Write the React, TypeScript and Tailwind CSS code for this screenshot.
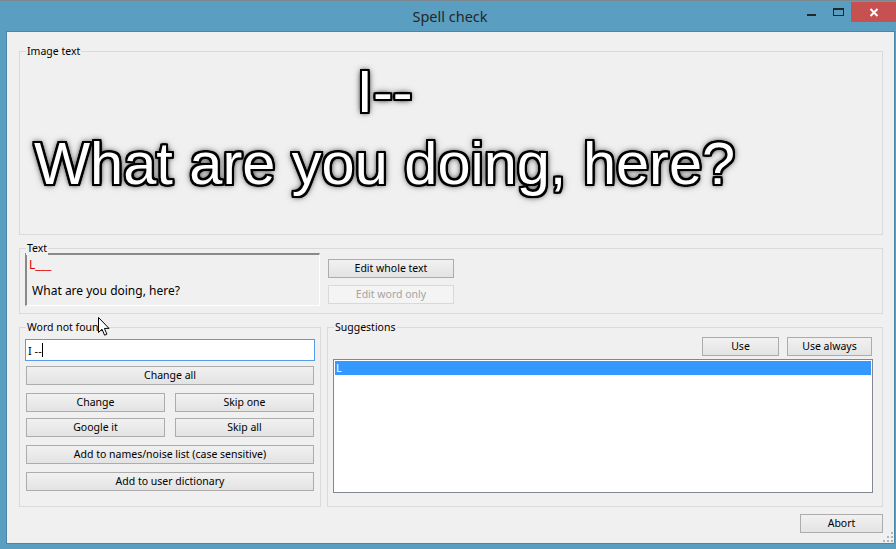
import React from "react";

function Btn({
  children,
  className = "",
  disabled = false,
}: {
  children: React.ReactNode;
  className?: string;
  disabled?: boolean;
}) {
  return (
    <div
      className={`flex items-center justify-center border text-[10.5px] leading-none whitespace-nowrap ${
        disabled
          ? "border-[#d9d9d9] bg-[#f4f4f4] text-[#a3a3a3]"
          : "border-[#acacac] bg-linear-to-b from-[#f1f1f1] to-[#e3e3e3] text-black"
      } ${className}`}
    >
      {children}
    </div>
  );
}

function GroupLabel({ children }: { children: React.ReactNode }) {
  return (
    <span className="absolute left-[6px] top-[-8px] px-[1px] bg-[#f0f0f0] text-[10.5px] leading-[14px] text-black whitespace-nowrap">
      {children}
    </span>
  );
}

export default function App() {
  return (
    <div className="w-[896px] h-[549px] overflow-hidden bg-[#5a9fc1] border-t border-[#7d8990] flex flex-col font-['Noto_Sans',sans-serif] text-black">
      {/* Title bar */}
      <div className="h-[30px] flex items-start shrink-0">
        <div className="w-[96px]" />
        <div className="flex-1 text-center text-[14.5px] leading-[30px] text-[#262626] pl-[4px]">
          Spell check
        </div>
        <div className="w-[96px] flex items-start">
          <div className="ml-[7px] mt-[13px] w-[9px] h-[2px] bg-[#262626]" />
          <div className="ml-[17px] mt-[7px] w-[11px] h-[8px] border border-t-2 border-[#262626]" />
          <div className="ml-[7px] mt-[1px] w-[45px] h-[20px] bg-[#c75050] flex items-center justify-center">
            <svg width="10" height="9" viewBox="0 0 10 9">
              <path d="M1.5 1 L8.5 8 M8.5 1 L1.5 8" stroke="#ffffff" strokeWidth="2" fill="none" />
            </svg>
          </div>
        </div>
      </div>

      {/* Client area */}
      <div className="relative ml-[6px] mr-[1px] mb-[5px] flex-1 border border-[#4b86a6] bg-[#f0f0f0] pl-[12px] pr-[11px] flex flex-col">
        {/* Image text */}
        <div className="relative mt-[19px] h-[184px] border border-[#dadada] shrink-0">
          <GroupLabel>Image text</GroupLabel>
          <div className="pl-[13px] pt-[4px]">
            <div className="w-[703px] text-center font-['Liberation_Sans',Arial,sans-serif] text-[59.5px] leading-[72px] text-white whitespace-nowrap [text-shadow:-2px_-2px_0_#000,2px_-2px_0_#000,-2px_2px_0_#000,2px_2px_0_#000,0_-2px_0_#000,0_2px_0_#000,-2px_0_0_#000,2px_0_0_#000,-1px_-2px_0_#000,1px_-2px_0_#000,-1px_2px_0_#000,1px_2px_0_#000,-2px_-1px_0_#000,2px_-1px_0_#000,-2px_1px_0_#000,2px_1px_0_#000,0_0_4px_#000,0_0_6px_rgba(0,0,0,0.8),0_0_8px_rgba(0,0,0,0.5)]">
              <div>I--</div>
              <div>What are you doing, here?</div>
            </div>
          </div>
        </div>

        {/* Text */}
        <div className="relative mt-[13px] h-[66px] border border-[#dadada] flex pl-[5px] pt-[4px] shrink-0">
          <GroupLabel>Text</GroupLabel>
          <div className="w-[295px] h-[53px] border-t-2 border-l-2 border-t-[#8a8a8a] border-l-[#8a8a8a] border-r border-b border-r-white border-b-white pl-[2px] pt-[3px] text-[12px] leading-[13px] whitespace-pre">
            <div className="text-[#e00000]">L___</div>
            <div> </div>
            <div> What are you doing, here?</div>
          </div>
          <div className="ml-[8px] mt-[6px] flex flex-col gap-[7px]">
            <Btn className="w-[126px] h-[19px]">Edit whole text</Btn>
            <Btn className="w-[126px] h-[19px]" disabled>
              Edit word only
            </Btn>
          </div>
        </div>

        {/* Bottom row */}
        <div className="mt-[13px] h-[180px] flex gap-[6px] shrink-0">
          {/* Word not found */}
          <div className="relative w-[302px] border border-[#dadada] pl-[5px] pt-[11px] flex flex-col">
            <GroupLabel>Word not found</GroupLabel>
            <svg
              className="absolute left-[78px] top-[-11px]"
              width="13"
              height="20"
              viewBox="0 0 13 20"
            >
              <path
                d="M0.5 0.5 L0.5 15.5 L4 12.2 L6.6 18.2 L8.9 17.2 L6.4 11.4 L11 11.4 Z"
                fill="#ffffff"
                stroke="#000000"
                strokeWidth="1"
                strokeLinejoin="round"
              />
            </svg>
            <div className="w-[290px] h-[22px] border border-[#569de5] bg-white flex items-center pl-[2px] text-[11px] leading-none">
              <span>I --</span>
              <span className="w-[1px] h-[14px] bg-black" />
            </div>
            <div className="ml-[1px] w-[288px] flex flex-col">
              <Btn className="mt-[5px] h-[19px]">Change all</Btn>
              <div className="mt-[8px] flex gap-[10px]">
                <Btn className="w-[139px] h-[19px]">Change</Btn>
                <Btn className="w-[139px] h-[19px]">Skip one</Btn>
              </div>
              <div className="mt-[6px] flex gap-[10px]">
                <Btn className="w-[139px] h-[19px]">Google it</Btn>
                <Btn className="w-[139px] h-[19px]">Skip all</Btn>
              </div>
              <Btn className="mt-[8px] h-[19px]">Add to names/noise list (case sensitive)</Btn>
              <Btn className="mt-[8px] h-[19px]">Add to user dictionary</Btn>
            </div>
          </div>

          {/* Suggestions */}
          <div className="relative w-[556px] border border-[#dadada] pl-[5px] pr-[9px] pt-[9px] flex flex-col">
            <GroupLabel>Suggestions</GroupLabel>
            <div className="mr-[1px] flex justify-end gap-[8px]">
              <Btn className="w-[77px] h-[19px]">Use</Btn>
              <Btn className="w-[85px] h-[19px]">Use always</Btn>
            </div>
            <div className="mt-[3px] h-[134px] border border-[#828790] bg-white p-[1px]">
              <div className="h-[14px] bg-[#3399ff] text-white text-[11px] leading-[14px] pl-[1px]">
                L
              </div>
            </div>
          </div>
        </div>

        {/* Abort */}
        <div className="mt-[7px] flex justify-end shrink-0">
          <Btn className="w-[83px] h-[19px]">Abort</Btn>
        </div>

        {/* Resize grip */}
        <svg
          className="absolute right-[1px] bottom-[1px]"
          width="10"
          height="10"
          viewBox="0 0 10 10"
        >
          <rect x="8" y="0" width="2" height="2" fill="#b5b5b5" />
          <rect x="4" y="4" width="2" height="2" fill="#b5b5b5" />
          <rect x="8" y="4" width="2" height="2" fill="#b5b5b5" />
          <rect x="0" y="8" width="2" height="2" fill="#b5b5b5" />
          <rect x="4" y="8" width="2" height="2" fill="#b5b5b5" />
          <rect x="8" y="8" width="2" height="2" fill="#b5b5b5" />
        </svg>
      </div>
    </div>
  );
}
